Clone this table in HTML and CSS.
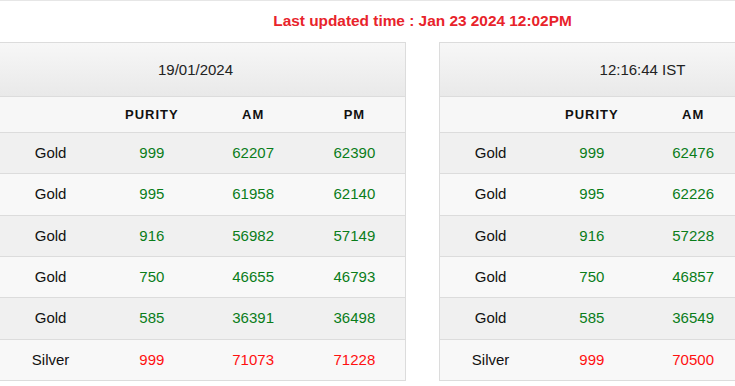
FILE: index.html
```html
<!DOCTYPE html>
<html>
<head>
<meta charset="utf-8">
<link rel="stylesheet" href="styles.css">
</head>
<body>
<div class="topline"></div>
<div class="page">
  <div class="updated">Last updated time : Jan 23 2024 12:02PM</div>
  <div class="tables">
    <table class="rates">
      <tr><th colspan="4" class="date date-left">19/01/2024</th></tr>
      <tr class="cols"><th></th><th>PURITY</th><th>AM</th><th>PM</th></tr>
      <tr class="odd"><td>Gold</td><td class="g">999</td><td class="g">62207</td><td class="g">62390</td></tr>
      <tr class="even"><td>Gold</td><td class="g">995</td><td class="g">61958</td><td class="g">62140</td></tr>
      <tr class="odd"><td>Gold</td><td class="g">916</td><td class="g">56982</td><td class="g">57149</td></tr>
      <tr class="even"><td>Gold</td><td class="g">750</td><td class="g">46655</td><td class="g">46793</td></tr>
      <tr class="odd"><td>Gold</td><td class="g">585</td><td class="g">36391</td><td class="g">36498</td></tr>
      <tr class="even"><td>Silver</td><td class="r">999</td><td class="r">71073</td><td class="r">71228</td></tr>
    </table>
    <table class="rates">
      <tr><th colspan="4" class="date">12:16:44 IST</th></tr>
      <tr class="cols"><th></th><th>PURITY</th><th>AM</th><th>PM</th></tr>
      <tr class="odd"><td>Gold</td><td class="g">999</td><td class="g">62476</td><td class="g">62650</td></tr>
      <tr class="even"><td>Gold</td><td class="g">995</td><td class="g">62226</td><td class="g">62399</td></tr>
      <tr class="odd"><td>Gold</td><td class="g">916</td><td class="g">57228</td><td class="g">57387</td></tr>
      <tr class="even"><td>Gold</td><td class="g">750</td><td class="g">46857</td><td class="g">46987</td></tr>
      <tr class="odd"><td>Gold</td><td class="g">585</td><td class="g">36549</td><td class="g">36651</td></tr>
      <tr class="even"><td>Silver</td><td class="r">999</td><td class="r">70500</td><td class="r">70700</td></tr>
    </table>
  </div>
</div>
</body>
</html>
```
FILE: styles.css
```css
html, body {
  margin: 0;
  padding: 0;
  overflow: hidden;
  background: #fff;
}
body {
  font-family: "Liberation Sans", Arial, sans-serif;
  color: #111;
}
.topline {
  height: 1px;
  background: #e6e6e6;
}
.page {
  width: 847px;
  margin-left: -1px;
}
.updated {
  height: 41px;
  line-height: 39px;
  text-align: center;
  font-weight: bold;
  font-size: 15.4px;
  color: #e8232b;
}
.tables {
  display: flex;
  gap: 33px;
}
.rates {
  width: 407px;
  flex: 0 0 407px;
  border: 1px solid #dcdcdc;
  border-collapse: separate;
  border-spacing: 0;
  table-layout: fixed;
  font-size: 15px;
  text-align: center;
}
.rates th, .rates td {
  padding: 0;
  text-align: center;
}
.date {
  height: 53px;
  line-height: 53px;
  font-weight: normal;
  font-size: 15px;
  color: #222;
  background: linear-gradient(#f7f7f7, #e9e9e9);
}
.date-left {
  padding-right: 14px !important;
}
.cols th {
  border-top: 1px solid #dcdcdc;
  height: 35px;
  line-height: 35px;
  background: #f7f7f7;
  font-size: 13px;
  font-weight: bold;
  letter-spacing: 1px;
  color: #111;
}
.odd td, .even td {
  border-top: 1px solid #dcdcdc;
  height: 40.33px;
  line-height: 40.33px;
  color: #111;
}
.odd td { background: #f0f0f0; }
.even td { background: #f8f8f8; }
.rates td.g { color: #0a7d1a; }
.rates td.r { color: #ff1010; }
```
